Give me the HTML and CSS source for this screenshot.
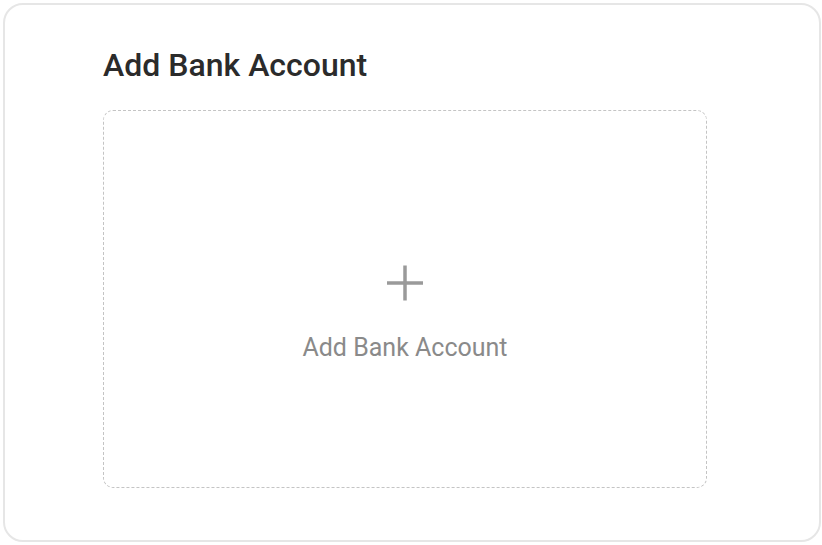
FILE: index.html
```html
<!DOCTYPE html>
<html>
<head>
<meta charset="utf-8">
<link rel="stylesheet" href="styles.css">
</head>
<body>
<div class="card">
  <h2 class="title">Add Bank Account</h2>
  <div class="add-box">
    <svg class="plus" width="38" height="38" viewBox="0 0 38 38"><path d="M19 1.5v35M1 19h36" stroke="#9a9a9a" stroke-width="3.5" fill="none"/></svg>
    <div class="add-label">Add Bank Account</div>
  </div>
</div>
</body>
</html>
```
FILE: styles.css
```css
html, body { margin: 0; padding: 0; background: #fff; }
body { font-family: Roboto, "Noto Sans", sans-serif; }
.card {
  margin: 3px 1px 3px 3px;
  width: 818px;
  height: 539px;
  box-sizing: border-box;
  border: 2px solid #e6e6e6;
  border-radius: 20px;
  padding: 42px 114px 0 98px;
}
.title {
  margin: 0 0 27px 0;
  font-size: 32px;
  font-weight: 500;
  color: #2b2b2b;
  line-height: 36px;
}
.add-box {
  width: 604px;
  height: 378px;
  box-sizing: border-box;
  border: 1px dashed #c4c4c4;
  border-radius: 10px;
  display: flex;
  flex-direction: column;
  align-items: center;
  padding-top: 153px;
}
.plus { display: block; margin-bottom: 31px; }
.add-label { font-size: 25px; line-height: 30px; color: #8a8a8a; }
```
